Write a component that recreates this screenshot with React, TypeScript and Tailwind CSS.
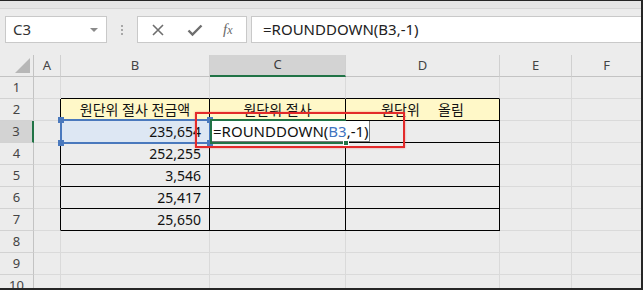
import clsx from "clsx";

const FONT = { fontFamily: '"Noto Sans", "Noto Sans CJK KR", sans-serif' };

const COL_LETTERS = ["A", "B", "C", "D", "E", "F"];

const values: Record<number, string> = {
  3: "235,654",
  4: "252,255",
  5: "3,546",
  6: "25,417",
  7: "25,650",
};

const heads = ["원단위 절사 전금액", "원단위 절사", "원단위     올림"];

function Cell({ row, col }: { row: number; col: number }) {
  const inTable = row >= 2 && row <= 7 && col >= 2 && col <= 4;
  const leftOfTable = col === 1 && row >= 2 && row <= 7;
  const aboveTable = row === 1 && col >= 2 && col <= 4;
  const last = col === 6;

  return (
    <div
      className={clsx(
        "flex items-center border-b overflow-visible whitespace-pre text-[14px] text-[#111]",
        !last && "border-r",
        inTable || aboveTable ? "border-b-black" : "border-b-[#dadada]",
        inTable || leftOfTable ? "border-r-black" : "border-r-[#dadada]",
        row === 2 && inTable && "bg-[#fff8c8] justify-center",
        row === 3 && col === 2 && "bg-[#dde7f3]",
        col === 2 && row >= 3 && "justify-end pr-[8px]"
      )}
    >
      {row === 2 && inTable ? heads[col - 2] : null}
      {col === 2 && values[row] ? values[row] : null}
    </div>
  );
}

export default function App() {
  const rows = [1, 2, 3, 4, 5, 6, 7, 8, 9, 10];

  return (
    <div className="w-[644px] h-[291px] bg-white overflow-hidden" style={FONT}>
      <div className="w-[643px] h-[290px] border-t border-r-2 border-b-2 border-[#262626] bg-[#ececec] flex flex-col overflow-hidden">
        {/* top toolbar / formula bar */}
        <div className="h-[54px] shrink-0 flex flex-col">
          <div className="h-[8px] border-b border-[#d6d6d6] bg-[#e6e6e6]" />
          <div className="flex items-start pt-[7px]">
            <div className="ml-[5px] w-[102px] h-[27px] bg-white border border-[#c9c9c9] flex items-center justify-between pl-[7px] pr-[8px]">
              <span className="text-[15px] text-[#333]">C3</span>
              <span className="w-0 h-0 border-l-[4px] border-r-[4px] border-t-[4px] border-l-transparent border-r-transparent border-t-[#8a8a8a]" />
            </div>
            <div className="w-[30px] h-[27px] flex flex-col items-center justify-center gap-[2px]">
              <span className="w-[2px] h-[2px] bg-[#a8a8a8]" />
              <span className="w-[2px] h-[2px] bg-[#a8a8a8]" />
              <span className="w-[2px] h-[2px] bg-[#a8a8a8]" />
            </div>
            <div className="w-[110px] h-[27px] bg-white border border-[#c9c9c9] flex items-center pl-[12px]">
              <svg width="14" height="14" viewBox="0 0 14 14" className="ml-[1px]">
                <path d="M2 2 L12 12 M12 2 L2 12" stroke="#6e6e6e" strokeWidth="1.6" fill="none" />
              </svg>
              <svg width="16" height="14" viewBox="0 0 16 14" className="ml-[22px]">
                <path d="M1.5 7.5 L5.5 11.5 L14.5 2.5" stroke="#6e6e6e" strokeWidth="2.4" fill="none" />
              </svg>
              <span
                className="ml-[20px] text-[15px] italic text-[#6a6a6a] leading-none"
                style={{ fontFamily: '"Liberation Serif", serif' }}
              >
                f<span className="text-[12px]">x</span>
              </span>
            </div>
            <div className="ml-[4px] flex-1 h-[27px] bg-white border border-[#c9c9c9] border-r-0 flex items-center pl-[11px]">
              <span className="text-[15px] text-[#222]">=ROUNDDOWN(B3,-1)</span>
            </div>
          </div>
        </div>

        {/* sheet grid */}
        <div className="relative flex-1">
          <div className="grid grid-cols-[34px_27px_149px_136px_154px_72px_69px] auto-rows-[22px]">
            {/* header row */}
            <div className="relative border-r border-b border-[#c3c3c3] bg-[#ececec]">
              <svg width="16" height="16" viewBox="0 0 16 16" className="absolute left-[15px] top-[3px]">
                <path d="M15 0 L15 15 L0 15 Z" fill="#b7b7b7" />
              </svg>
            </div>
            {COL_LETTERS.map((l, i) => (
              <div
                key={l}
                className={clsx(
                  "flex items-center justify-center text-[13px]",
                  i !== 5 && "border-r border-r-[#d0d0d0]",
                  l === "C"
                    ? "bg-[#d3d3d3] border-b-2 border-b-[#217346] text-[#3b3b3b]"
                    : "bg-[#ececec] border-b border-b-[#c3c3c3] text-[#444]"
                )}
              >
                {l}
              </div>
            ))}

            {rows.map((r) => (
              <div key={r} className="contents">
                <div
                  className={clsx(
                    "flex items-center justify-center text-[13px] text-[#444] border-b border-b-[#d2d2d2]",
                    r === 3
                      ? "bg-[#d3d3d3] border-r-2 border-r-[#217346]"
                      : "bg-[#ececec] border-r border-r-[#c3c3c3]"
                  )}
                >
                  {r}
                </div>
                {[1, 2, 3, 4, 5, 6].map((c) => (
                  <Cell key={c} row={r} col={c} />
                ))}
              </div>
            ))}
          </div>

          {/* B3 reference highlight */}
          <div className="absolute left-[60px] top-[64px] w-[151px] h-[25px] border-2 border-[#4a79bd]">
            <span className="absolute -left-[4px] -top-[4px] w-[6px] h-[6px] bg-[#4a79bd]" />
            <span className="absolute -right-[4px] -top-[4px] w-[6px] h-[6px] bg-[#4a79bd]" />
            <span className="absolute -left-[4px] -bottom-[4px] w-[6px] h-[6px] bg-[#4a79bd]" />
            <span className="absolute -right-[4px] -bottom-[4px] w-[6px] h-[6px] bg-[#4a79bd]" />
          </div>

          {/* C3 in-cell editor */}
          <div className="absolute left-[212px] top-[66px] w-[158px] h-[21px] bg-white border-r border-b border-[#7a7a7a] flex items-center pl-[1px]">
            <span className="text-[15px] text-[#111] whitespace-pre">
              =ROUNDDOWN(<span className="text-[#3f74c0]">B3</span>,-1)
            </span>
          </div>
          <div className="absolute left-[210px] top-[64px] w-[136px] h-[25px] border-2 border-r-0 border-[#217346]">
            <span className="absolute -right-[3px] -bottom-[4px] w-[6px] h-[6px] bg-[#217346] border border-white" />
          </div>

          {/* red annotation box */}
          <div className="absolute left-[195px] top-[57px] w-[210px] h-[36px] border-2 border-[#e32a2a] shadow-[0_0_2px_rgba(227,42,42,0.45)]" />
        </div>
      </div>
    </div>
  );
}
